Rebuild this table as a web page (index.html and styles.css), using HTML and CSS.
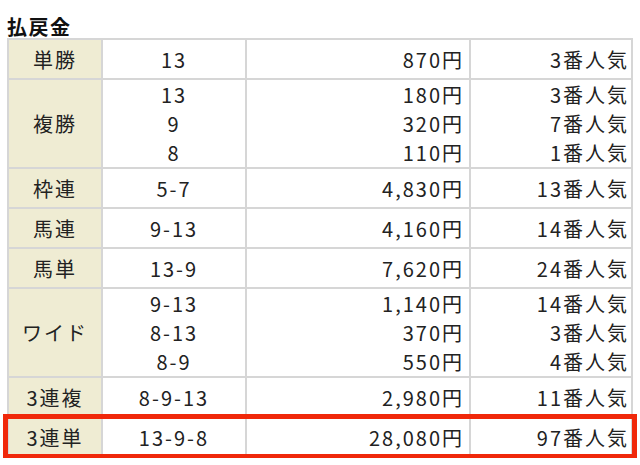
FILE: index.html
```html
<!DOCTYPE html>
<html lang="ja">
<head>
<meta charset="utf-8">
<link rel="stylesheet" href="styles.css">
</head>
<body>
<div class="payout">
  <h2 class="payout-title">払戻金</h2>
  <div class="table-wrap">
    <table class="payout-table">
      <tr><th>単勝</th><td class="num">13</td><td class="yen">870円</td><td class="pop">3番人気</td></tr>
      <tr><th>複勝</th><td class="num">13<br>9<br>8</td><td class="yen">180円<br>320円<br>110円</td><td class="pop">3番人気<br>7番人気<br>1番人気</td></tr>
      <tr><th>枠連</th><td class="num">5-7</td><td class="yen">4,830円</td><td class="pop">13番人気</td></tr>
      <tr><th>馬連</th><td class="num">9-13</td><td class="yen">4,160円</td><td class="pop">14番人気</td></tr>
      <tr><th>馬単</th><td class="num">13-9</td><td class="yen">7,620円</td><td class="pop">24番人気</td></tr>
      <tr><th>ワイド</th><td class="num">9-13<br>8-13<br>8-9</td><td class="yen">1,140円<br>370円<br>550円</td><td class="pop">14番人気<br>3番人気<br>4番人気</td></tr>
      <tr><th>3連複</th><td class="num">8-9-13</td><td class="yen">2,980円</td><td class="pop">11番人気</td></tr>
      <tr><th>3連単</th><td class="num">13-9-8</td><td class="yen">28,080円</td><td class="pop">97番人気</td></tr>
    </table>
    <div class="highlight"></div>
  </div>
</div>
</body>
</html>
```
FILE: styles.css
```css
html, body {
  margin: 0;
  padding: 0;
  background: #fff;
}
body {
  font-family: "Noto Sans CJK JP", "Noto Sans", sans-serif;
  color: #222;
}
.payout {
  padding: 16px 6px 0 7px;
}
.payout-title {
  margin: 0;
  font-size: 20px;
  line-height: 22px;
  letter-spacing: 1.5px;
  font-weight: bold;
  color: #111;
}
.table-wrap {
  position: relative;
}
.payout-table {
  width: 626px;
  border-collapse: collapse;
  table-layout: fixed;
  font-size: 20px;
  line-height: 29px;
  letter-spacing: 2px;
}
.payout-table th,
.payout-table td {
  border: 2px solid #d6d6d6;
  height: 38px;
  padding: 0;
  vertical-align: middle;
}
.payout-table th {
  width: 92px;
  background: #efecd3;
  font-weight: normal;
  text-align: center;
  color: #222;
}
.payout-table td.num {
  width: 142px;
  text-align: center;
}
.payout-table td.yen {
  width: 217px;
  text-align: right;
  padding-right: 5px;
}
.payout-table td.pop {
  text-align: right;
  padding-right: 2px;
}
.highlight {
  position: absolute;
  left: -4px;
  right: -3px;
  bottom: -1px;
  height: 45px;
  border: 5px solid #f0280a;
  box-sizing: border-box;
  pointer-events: none;
}
```
